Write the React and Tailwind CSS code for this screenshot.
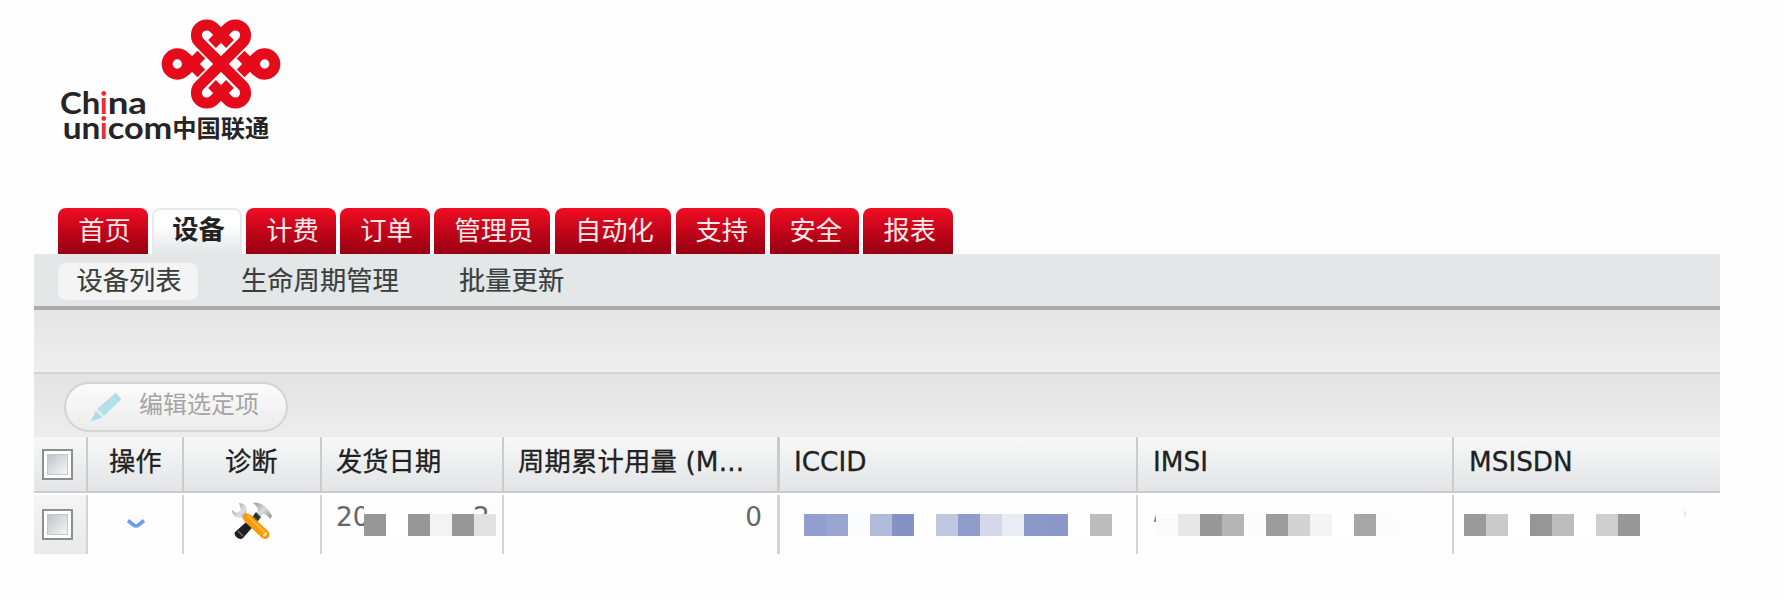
import React from "react";

const tabs = ["首页", "设备", "计费", "订单", "管理员", "自动化", "支持", "安全", "报表"];

function Knot() {
  const top = "M573 192 L508.700 127.700 A30.200 30.200 0 1 1 551.300 83.300 L600 132";
  const side = "M464 170 L514 220 M464 214 L514 164";
  return (
    <g fill="none" stroke="#e60b1b" strokeWidth="33">
      <path d={top} />
      <path d={top} transform="matrix(-1 0 0 1 1146 0)" />
      <path d={top} transform="matrix(1 0 0 -1 0 384)" />
      <path d={top} transform="matrix(-1 0 0 -1 1146 384)" />
      <path d={side} />
      <circle cx="442" cy="192" r="30.500" />
      <g transform="matrix(-1 0 0 1 1146 0)">
        <path d={side} />
        <circle cx="442" cy="192" r="30.500" />
      </g>
    </g>
  );
}

function Logo() {
  return (
    <svg className="ml-[30px] block h-[160px] w-[270px]" viewBox="0 0 810 480">
      <Knot />
      <g fill="#262425" fontFamily="Lato, sans-serif" fontWeight="700">
        <text x="90" y="342" fontSize="90" textLength="121" lengthAdjust="spacingAndGlyphs">Ch</text>
        <text x="210" y="342" fontSize="90" fill="#ee2a35">i</text>
        <text x="233" y="342" fontSize="90" textLength="118" lengthAdjust="spacingAndGlyphs">na</text>
        <text x="98" y="417" fontSize="90" textLength="113" lengthAdjust="spacingAndGlyphs">un</text>
        <text x="210" y="417" fontSize="90" fill="#ee2a35">i</text>
        <text x="233" y="417" fontSize="90" textLength="194" lengthAdjust="spacingAndGlyphs">com</text>
        <text x="427" y="412" fontSize="72" textLength="291" lengthAdjust="spacingAndGlyphs" fontFamily="'Noto Sans CJK SC', sans-serif">中国联通</text>
      </g>
    </svg>
  );
}

function Checkbox() {
  return (
    <div className="ml-[8px] h-[31px] w-[31px] border-2 border-[#8b908d] bg-white p-[3px]">
      <div className="h-full w-full border border-[#c3c6ca] bg-linear-to-br from-[#bfc4cb] to-[#f6f6f6]" />
    </div>
  );
}

function Pencil() {
  return (
    <svg className="block h-[30px] w-[32px]" viewBox="0 0 32 30">
      <path d="M26 .5 31.5 7 14 24 7 17Z" fill="#b5dfec" />
      <path d="M6 18 13 25 1 29.5Z" fill="#add9e8" />
      <path d="M24.500 2.500 29.500 8.500" stroke="#9fcbd9" strokeWidth="1" />
      <path d="M6 18 13 25" stroke="#e4f3f7" strokeWidth="1.500" />
    </svg>
  );
}

function Tools() {
  return (
    <svg className="block h-[38px] w-[42px]" viewBox="0 0 42 38">
      <defs>
        <linearGradient id="steel" x1="0" y1="0" x2="1" y2="1">
          <stop offset="0" stopColor="#94989d" />
          <stop offset=".5" stopColor="#dbdde0" />
          <stop offset="1" stopColor="#84888d" />
        </linearGradient>
      </defs>
      <path d="M8 1 C14 1 17 6 15 11 L20 15 15 20 10 15 C5 17 1 13 1 8 L6 11 10 8Z" fill="url(#steel)" />
      <path d="M22 1 C30 0 36 4 41 14 L39 17 C35 11 32 11 30 14 L26 11 C28 7 26 4 22 1Z" fill="url(#steel)" />
      <path d="M25 10 30 15 27 19 22 14Z" fill="#303236" />
      <path d="M22 14 27 19 12 36 C9 39 2 34 4 30Z" fill="#1d1f21" />
      <path d="M7 29 12 34" stroke="#666a6d" strokeWidth="1.500" />
      <path d="M12.500 12.500 C15 10 18 11 22 15 L37 29 C41 34 36 39 31 36 L14 20 C12 17 11 14 12.500 12.500Z" fill="#ff9807" />
      <path d="M17 14 33 30" stroke="#ffc04a" strokeWidth="1.800" strokeLinecap="round" />
      <ellipse cx="34" cy="32.500" rx="2.500" ry="1.300" transform="rotate(-45 34 32.500)" fill="#fff1d8" />
    </svg>
  );
}

/* A run of 22px mosaic cells hiding a private value. */
function Mosaic({ cells, className }) {
  return (
    <div className={"flex h-[22px] " + className}>
      {cells.map((c, i) => (
        <div key={i} className="h-[22px] w-[22px] shrink-0" style={{ backgroundColor: c }} />
      ))}
    </div>
  );
}

const W = "#ffffff";
const grid = "grid grid-cols-[54px_96px_138px_182px_276px_358px_316px_266px]";
const hd = "h-full border-[#cbcbcb] pt-[6px] leading-[38px] whitespace-nowrap overflow-hidden";
const td = "h-full border-[#d3d3d3] overflow-hidden";

export default function App() {
  return (
    <div className="h-[600px] w-[1784px] overflow-hidden bg-[#fefefe] font-['DejaVu_Sans','Noto_Sans_CJK_SC',sans-serif] text-[26.3px] text-[#222]">
      <div className="h-[207.500px]">
        <Logo />
      </div>
      <nav className="flex h-[46.500px] gap-[4.600px] pl-[58.400px]">
        {tabs.map((t, i) => (
          <div
            key={t}
            className={
              "h-[46.500px] shrink-0 rounded-t-[8px] pl-[3px] text-center " +
              (t.length === 3 ? "w-[116px] " : "w-[89.400px] ") +
              (i === 1
                ? "border-2 border-b-0 border-[#e6eaea] bg-linear-to-b from-white from-30% to-[#e3e7e8] font-bold leading-[41px]"
                : "bg-linear-to-b from-[#f20d23] to-[#960111] leading-[46px] text-[#ffe9eb]")
            }
          >
            {t}
          </div>
        ))}
      </nav>
      <main className="ml-[34px] h-[300px] w-[1686px]">
        <div className="flex h-[56px] items-start border-b-4 border-[#acacac] bg-[#e3e7e8] pt-[9px] pl-[24px] text-[#3c3e3e] [-webkit-text-stroke:0.200px]">
          <div className="h-[37px] w-[140px] rounded-[8px] bg-[#f4f4f4] pl-[2px] text-center leading-[36px]">设备列表</div>
          <div className="ml-[43px] w-[158px] leading-[37px] whitespace-nowrap">生命周期管理</div>
          <div className="ml-[60px] leading-[37px] whitespace-nowrap">批量更新</div>
        </div>
        <div className="h-[64px] border-b-2 border-[#d3d3d3] bg-linear-to-b from-[#e5e5e5] to-[#eeeeee]" />
        <div className="h-[62.500px] bg-linear-to-b from-[#e3e3e3] to-[#ededed] pt-[8px] pl-[30px]">
          <div className="flex h-[50px] w-[224px] items-center rounded-full border-2 border-[#d3d3d3] bg-linear-to-b from-[#fbfbfb] to-[#ececec] pl-[24px]">
            <Pencil />
            <span className="ml-[17px] pb-[4px] text-[24px] text-[#a5a5a5]">编辑选定项</span>
          </div>
        </div>
        <div className={grid + " h-[56px] border-b-[2.500px] border-[#cbcbcb] bg-linear-to-b from-[#f8f8f8] to-[#e2e4e6] text-[#202122] [-webkit-text-stroke:0.300px]"}>
          <div className="h-full border-r-2 border-[#cbcbcb] pt-[12px]"><Checkbox /></div>
          <div className={hd + " border-r-2 pl-[21px]"}>操作</div>
          <div className={hd + " border-r-2 pl-[41px]"}>诊断</div>
          <div className={hd + " border-r-2 pl-[14px]"}>发货日期</div>
          <div className={hd + " border-r-3 pl-[14px] tracking-[0.180px]"}>周期累计用量 (M...</div>
          <div className={hd + " border-r-2 pl-[14px]"}>ICCID</div>
          <div className={hd + " border-r-2 pl-[15px]"}>IMSI</div>
          <div className={hd + " pl-[15px]"}>MSISDN</div>
        </div>
        <div className={grid + " mt-[2px] h-[59.500px] text-[#666]"}>
          <div className="h-full border-r-2 border-[#d3d3d3] bg-linear-to-b from-[#f5f5f5] to-[#e9e9e9] pt-[14px]"><Checkbox /></div>
          <div className={td + " border-r-2 pt-[24px] pl-[39px]"}>
            <svg className="block h-[10px] w-[18px]" viewBox="0 0 18 10" fill="none" stroke="#6a9bf5" strokeWidth="3.600">
              <path d="M1 1.500 L6.500 6 Q9 8 11.500 6 L17 1.500" />
            </svg>
          </div>
          <div className={td + " border-r-2 pt-[7px] pl-[47px]"}><Tools /></div>
          <div className={td + " border-r-2 pl-[14px]"}>
            <div className="flex h-[41px]">
              <div className="w-[28px] shrink-0 overflow-hidden leading-[44px]">20</div>
              <div className="w-[132px] shrink-0">
                <div className="h-[19px] overflow-hidden pl-[109px] leading-[44px]">2</div>
                <Mosaic className="" cells={["#979797", W, "#979797", "#f3f3f3", "#979797", "#e2e2e2"]} />
              </div>
            </div>
          </div>
          <div className={td + " border-r-3 pr-[15px] text-right leading-[44px]"}>0</div>
          <div className={td + " border-r-2 pt-[19px] pl-[24px]"}>
            <Mosaic className="" cells={["#929ecb", "#99a5d0", "#fbfcfe", "#b0bad9", "#8592c4", W, "#c2c7e1", "#8f9bc8", "#d3d8ea", "#e9ecf5", "#8c98c6", "#8b97c7", W, "#bcbcbc"]} />
          </div>
          <div className={td + " flex border-r-2 pt-[19px] pl-[15px]"}>
            <svg className="h-[8px] w-[3px] shrink-0" viewBox="0 0 3 8"><path d="M3 .5V8H0.500Z" fill="#888" /></svg>
            <Mosaic className="" cells={["#fbfbfb", "#e7e7e7", "#979797", "#b5b5b5", "#fcfcfc", "#9c9c9c", "#d3d3d3", "#f4f4f4", W, "#a6a6a6", "#fcfcfc"]} />
          </div>
          <div className={td + " flex items-start pt-[16px] pl-[10px]"}>
            <Mosaic className="mt-[3px]" cells={["#9a9a9a", "#cacaca", W, "#969696", "#bdbdbd", W, "#cecece", "#979797"]} />
            <div className="ml-[44px] h-[6px] w-[2px] bg-[#e8e8e8]" />
          </div>
        </div>
      </main>
    </div>
  );
}
